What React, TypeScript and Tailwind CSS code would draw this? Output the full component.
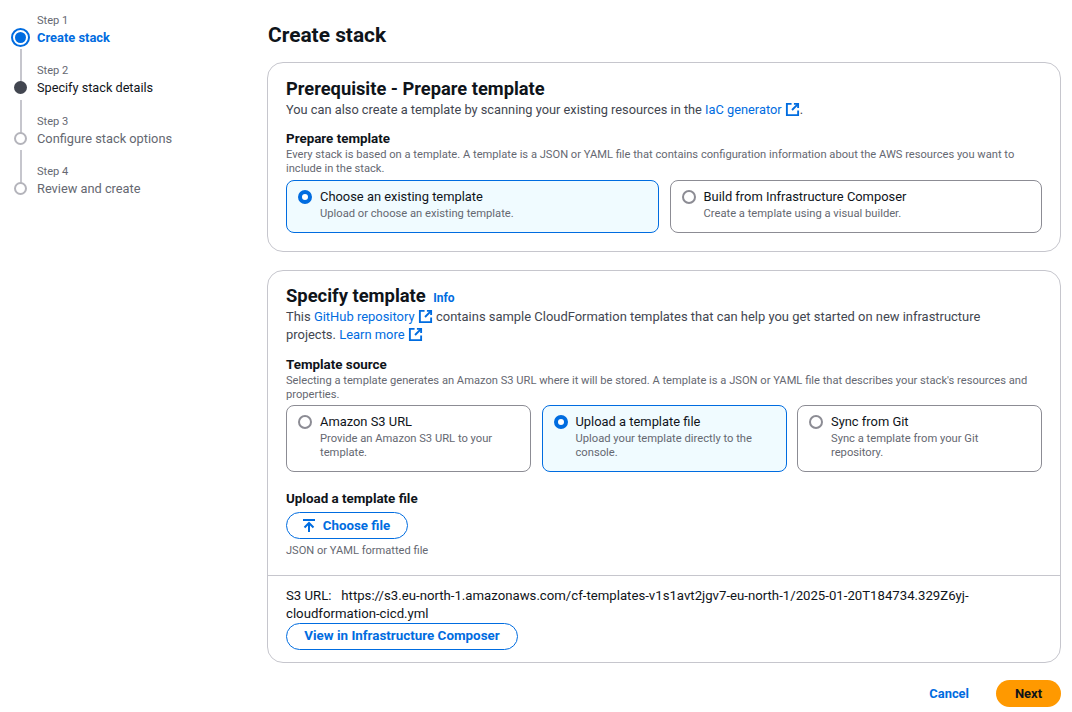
import type { ReactNode } from 'react';

const steps = [
  { step: 'Step 1', label: 'Create stack', state: 'active' },
  { step: 'Step 2', label: 'Specify stack details', state: 'next' },
  { step: 'Step 3', label: 'Configure stack options', state: 'off' },
  { step: 'Step 4', label: 'Review and create', state: 'off' },
];

const ExternalIcon = () => (
  <svg viewBox="0 0 16 16" className="inline-block w-[15px] h-[15px] align-[-3px]" fill="none" stroke="#006ce0" strokeWidth="2">
    <path d="M7 2H2v12h12V9" />
    <path d="M9.5 2H14v4.5" />
    <path d="M14 2L7.5 8.5" />
  </svg>
);

const Link = ({ children }: { children: ReactNode }) => <span className="text-[#006ce0]">{children}</span>;

const StepDot = ({ state }: { state: string }) => {
  if (state === 'active') {
    return (
      <div className="w-[19px] h-[19px] rounded-full border-2 border-[#006ce0] flex items-center justify-center bg-white">
        <div className="w-[11px] h-[11px] rounded-full bg-[#006ce0]" />
      </div>
    );
  }
  if (state === 'next') return <div className="w-[13px] h-[13px] rounded-full bg-[#424650]" />;
  return <div className="w-[13px] h-[13px] rounded-full border-2 border-[#b4b4bb] bg-white" />;
};

const Sidebar = () => (
  <div className="w-[267px] shrink-0 pt-[13.6px] pl-[11px]">
    {steps.map((s, i) => (
      <div key={s.step} className="grid grid-cols-[26px_1fr] grid-rows-[14px_19px] h-[50.5px]">
        <div className="flex justify-center w-[19px]">
          {i > 0 && <div className="w-[2px] h-[34px] bg-[#c6c6cd] -mt-[15px] shrink-0" />}
        </div>
        <div className="text-[11.1px] leading-[14px] text-[#656871]">{s.step}</div>
        <div className="flex justify-center items-center w-[19px] h-[19px]">
          <StepDot state={s.state} />
        </div>
        <div
          className={
            s.state === 'active'
              ? 'text-[12.9px] leading-[20px] font-bold text-[#006ce0]'
              : s.state === 'next'
                ? 'text-[12.7px] leading-[20px] text-[#0f141a]'
                : 'text-[12.8px] leading-[20px] text-[#656871]'
          }
        >
          {s.label}
        </div>
      </div>
    ))}
  </div>
);

const RadioCard = ({
  title,
  desc,
  selected,
}: {
  title: string;
  desc: string;
  selected?: boolean;
}) => (
  <div
    className={
      selected
        ? 'flex-1 min-w-0 rounded-lg border border-[#006ce0] bg-[#f0fbff] pl-[11px] pr-3 pt-[7px] pb-[11px] flex gap-[8px]'
        : 'flex-1 min-w-0 rounded-lg border border-[#8c8c94] bg-white pl-[11px] pr-3 pt-[7px] pb-[11px] flex gap-[8px]'
    }
  >
    {selected ? (
      <div className="w-[14px] h-[14px] mt-[2px] shrink-0 rounded-full border-[4px] border-[#006ce0] bg-white" />
    ) : (
      <div className="w-[14px] h-[14px] mt-[2px] shrink-0 rounded-full border-2 border-[#8c8c94] bg-white" />
    )}
    <div className="min-w-0">
      <div className="text-[12.9px] leading-[18px] text-[#0f141a]">{title}</div>
      <div className="text-[11.2px] leading-[14px] text-[#656871] mt-[1px]">{desc}</div>
    </div>
  </div>
);

const Card = ({ children }: { children: ReactNode }) => (
  <div className="rounded-2xl border border-[#c6c6cd] bg-white">{children}</div>
);

const FieldHead = ({ title, children }: { title: string; children: ReactNode }) => (
  <>
    <div className="text-[13.4px] leading-[19px] font-bold text-[#0f141a]">{title}</div>
    <div className="text-[11.15px] leading-[14px] text-[#656871] mb-[3px]">{children}</div>
  </>
);

export default function App() {
  return (
    <div className="w-[1072px] h-[712px] bg-white flex overflow-hidden font-['Roboto',sans-serif]">
      <Sidebar />
      <div className="w-[794px] shrink-0">
        <h1 className="text-[20.9px] leading-[24px] font-bold text-[#0f141a] ml-px mt-[23px] mb-[15px]">Create stack</h1>

        <Card>
          <div className="px-[18px] pt-[15px] pb-[18px]">
            <h2 className="text-[18.3px] leading-[22px] font-bold text-[#0f141a]">Prerequisite - Prepare template</h2>
            <p className="text-[12.8px] leading-[18px] text-[#424650] mt-px mb-[10px]">
              You can also create a template by scanning your existing resources in the <Link>IaC generator</Link>{' '}
              <ExternalIcon />.
            </p>
            <FieldHead title="Prepare template">
              <div>Every stack is based on a template. A template is a JSON or YAML file that contains configuration information about the AWS resources you want to</div>
              <div>include in the stack.</div>
            </FieldHead>
            <div className="flex gap-[11px] mt-[4px]">
              <RadioCard selected title="Choose an existing template" desc="Upload or choose an existing template." />
              <RadioCard title="Build from Infrastructure Composer" desc="Create a template using a visual builder." />
            </div>
          </div>
        </Card>

        <div className="mt-[18px]">
          <Card>
            <div className="px-[18px] pt-[15px] pb-[17px] border-b border-[#c6c6cd]">
              <h2 className="text-[18.4px] leading-[20px] font-bold text-[#0f141a]">
                Specify template <span className="text-[12px] text-[#006ce0] ml-[3px]">Info</span>
              </h2>
              <div className="text-[12.95px] leading-[18px] text-[#424650] mb-[11px]">
                <div>
                  This <Link>GitHub repository</Link> <ExternalIcon /> contains sample CloudFormation templates that can help you get started on new infrastructure
                </div>
                <div>
                  projects. <Link>Learn more</Link> <ExternalIcon />
                </div>
              </div>
              <FieldHead title="Template source">
                <div>Selecting a template generates an Amazon S3 URL where it will be stored. A template is a JSON or YAML file that describes your stack's resources and</div>
                <div>properties.</div>
              </FieldHead>
              <div className="flex gap-[10.5px] mb-[18px]">
                <RadioCard title="Amazon S3 URL" desc="Provide an Amazon S3 URL to your template." />
                <RadioCard selected title="Upload a template file" desc="Upload your template directly to the console." />
                <RadioCard title="Sync from Git" desc="Sync a template from your Git repository." />
              </div>
              <div className="text-[13.4px] leading-[18px] font-bold text-[#0f141a] mb-[4px]">Upload a template file</div>
              <button className="w-[122px] h-[27px] pr-[3px] rounded-full border border-[#006ce0] text-[13.3px] font-bold text-[#006ce0] flex items-center justify-center gap-[6px]">
                <svg viewBox="0 0 16 16" className="w-4 h-4" fill="none" stroke="#006ce0" strokeWidth="2">
                  <path d="M2 2h12" />
                  <path d="M8 14V5" />
                  <path d="M3.5 9.5L8 5l4.5 4.5" />
                </svg>
                Choose file
              </button>
              <div className="text-[11.1px] leading-[14px] text-[#656871] mt-[5px]">JSON or YAML formatted file</div>
            </div>
            <div className="px-[18px] pt-[11px] pb-[12px]">
              <div className="text-[13.2px] leading-[18px] text-[#0f141a]">
                <div>S3 URL: &nbsp;&nbsp;https://s3.eu-north-1.amazonaws.com/cf-templates-v1s1avt2jgv7-eu-north-1/2025-01-20T184734.329Z6yj-</div>
                <div>cloudformation-cicd.yml</div>
              </div>
              <button className="w-[232px] h-[27px] rounded-full border border-[#006ce0] text-[13.4px] font-bold text-[#006ce0]">
                View in Infrastructure Composer
              </button>
            </div>
          </Card>
        </div>

        <div className="flex justify-end items-center gap-[27px] mt-[17px]">
          <span className="text-[12.9px] font-bold text-[#006ce0]">Cancel</span>
          <button className="w-[65px] h-[27px] rounded-full bg-[#ff9900] text-[13px] font-bold text-[#0f141a]">Next</button>
        </div>
      </div>
    </div>
  );
}
